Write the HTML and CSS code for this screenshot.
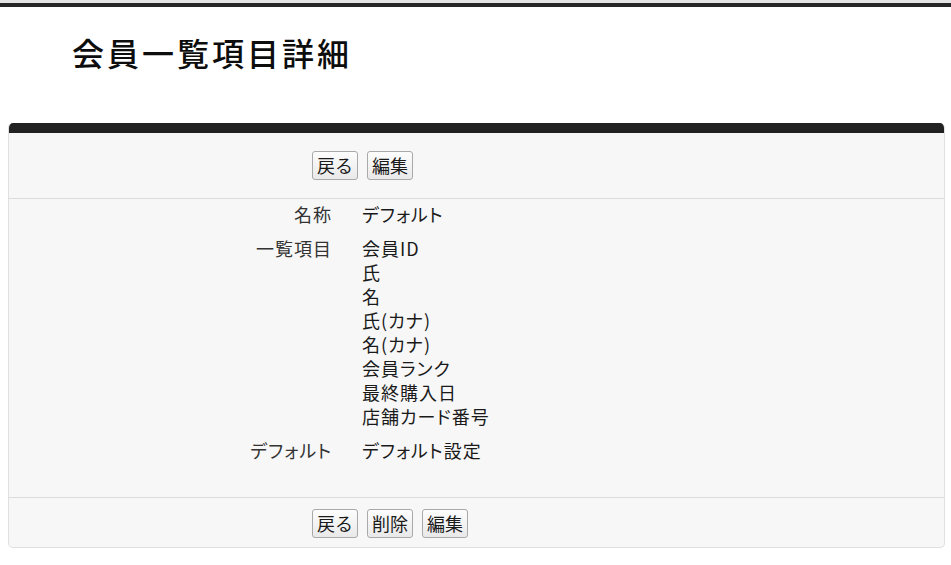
FILE: index.html
```html
<!DOCTYPE html>
<html lang="ja">
<head>
<meta charset="utf-8">
<title>会員一覧項目詳細</title>
<link rel="stylesheet" href="styles.css">
</head>
<body>
<div class="topline"></div>
<header class="page-head">
  <h1 class="page-title">会員一覧項目詳細</h1>
</header>
<section class="panel">
  <div class="panel-head"></div>
  <div class="actions actions-top">
    <button class="btn">戻る</button>
    <button class="btn">編集</button>
  </div>
  <div class="details">
    <div class="row">
      <div class="label">名称</div>
      <div class="value">デフォルト</div>
    </div>
    <div class="row">
      <div class="label">一覧項目</div>
      <div class="value">
        <div>会員ID</div>
        <div>氏</div>
        <div>名</div>
        <div>氏(カナ)</div>
        <div>名(カナ)</div>
        <div>会員ランク</div>
        <div>最終購入日</div>
        <div>店舗カード番号</div>
      </div>
    </div>
    <div class="row">
      <div class="label">デフォルト</div>
      <div class="value">デフォルト設定</div>
    </div>
  </div>
  <div class="actions actions-bottom">
    <button class="btn">戻る</button>
    <button class="btn">削除</button>
    <button class="btn">編集</button>
  </div>
</section>
</body>
</html>
```
FILE: styles.css
```css
* { box-sizing: border-box; }
html, body { margin: 0; padding: 0; background: #fff; }
body {
  font-family: "Noto Sans CJK JP", "Noto Sans", sans-serif;
  color: #222;
}
.topline {
  height: 7px;
  border-top: 3px solid #e4e4e4;
  background: #262626;
}
.page-head {
  padding: 23px 0 0 72px;
  height: 115px;
}
.page-title {
  margin: 0;
  font-size: 32px;
  font-weight: 500;
  line-height: 44px;
  letter-spacing: 3px;
  color: #0d0d0d;
}
.panel {
  margin: 1px 6px 0 8px;
  border: 1px solid #e0e0e0;
  border-top: none;
  border-radius: 5px;
  background: #f7f7f7;
  overflow: hidden;
}
.panel-head {
  height: 10px;
  background: #222;
}
.actions {
  display: flex;
  gap: 9px;
  padding-left: 303px;
}
.actions-top {
  padding-top: 18px;
  padding-bottom: 18px;
  border-bottom: 1px solid #dcdcdc;
}
.actions-bottom {
  padding-top: 11px;
  padding-bottom: 9px;
  border-top: 1px solid #dcdcdc;
}
.btn {
  height: 29px;
  padding: 0 4px;
  font-family: inherit;
  font-size: 18px;
  line-height: 27px;
  color: #1a1a1a;
  background: linear-gradient(#fdfdfd, #e9e9e9);
  border: 1px solid #a9a9a9;
  border-radius: 3px;
}
.details {
  padding: 3px 0 35px;
  display: flex;
  flex-direction: column;
  gap: 10px;
}
.row {
  display: flex;
  font-size: 18px;
  line-height: 24px;
  letter-spacing: 1px;
  font-feature-settings: "palt";
}
.label {
  width: 323px;
  text-align: right;
  color: #333;
}
.value {
  margin-left: 30px;
  color: #1a1a1a;
}
```
